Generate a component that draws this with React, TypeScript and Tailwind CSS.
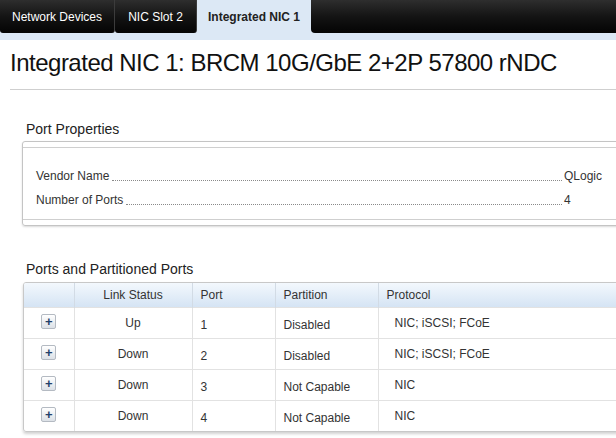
import React from "react";

const tabs = [
  { label: "Network Devices", width: "w-[115px]", active: false },
  { label: "NIC Slot 2", width: "w-[82px]", active: false },
  { label: "Integrated NIC 1", width: "w-[114px]", active: true },
];

const properties = [
  { name: "Vendor Name", value: "QLogic" },
  { name: "Number of Ports", value: "4" },
];

const ports = [
  { status: "Up", port: "1", partition: "Disabled", protocol: "NIC; iSCSI; FCoE" },
  { status: "Down", port: "2", partition: "Disabled", protocol: "NIC; iSCSI; FCoE" },
  { status: "Down", port: "3", partition: "Not Capable", protocol: "NIC" },
  { status: "Down", port: "4", partition: "Not Capable", protocol: "NIC" },
];

function TabBar() {
  return (
    <div className="flex h-[40px] bg-[#dce8f5]">
      {tabs.map((t) =>
        t.active ? (
          <div
            key={t.label}
            className={`${t.width} h-[33px] flex items-center justify-center text-[12px] font-bold text-[#222] bg-[#dce8f5]`}
          >
            {t.label}
          </div>
        ) : (
          <div
            key={t.label}
            className={`${t.width} h-[33px] flex items-center justify-center text-[12px] text-white bg-gradient-to-b from-[#2e2e2e] via-[#141414] to-[#050505] border-r border-[#3c3c3c] rounded-b-[3px]`}
          >
            {t.label}
          </div>
        )
      )}
      <div className="flex-1 h-[33px] bg-gradient-to-b from-[#2e2e2e] via-[#141414] to-[#050505] rounded-bl-[4px]" />
    </div>
  );
}

function PlusButton() {
  return (
    <span className="inline-flex items-center justify-center w-[15px] h-[15px] border border-[#b4bac2] rounded-[2px] bg-gradient-to-b from-white to-[#dce1e7] text-[#22406a] text-[13px] font-bold leading-none">
      +
    </span>
  );
}

export default function App() {
  return (
    <div
      className="w-[616px] h-[438px] overflow-hidden bg-white text-[#333]"
      style={{ fontFamily: '"Liberation Sans", Arial, sans-serif' }}
    >
      <TabBar />

      <h1 className="mt-[9px] ml-[10px] text-[24px] leading-[28px] tracking-[-0.5px] text-[#111] font-normal whitespace-nowrap">
        Integrated NIC 1: BRCM 10G/GbE 2+2P 57800 rNDC
      </h1>
      <div className="ml-[10px] mt-[12px] border-t border-[#cfcfcf]" />

      {/* Port Properties */}
      <h2 className="mt-[31px] ml-[26px] text-[14px] leading-[16px] text-[#222]">Port Properties</h2>
      <div className="ml-[22px] w-[610px] mt-[4px] border border-[#c4c4c4] rounded-[3px] shadow-[0_1px_2px_rgba(0,0,0,0.15)] py-[5px]">
        <div className="border-t border-b border-[#cfcfcf] pt-[13px] pb-[10px]">
          {properties.map((p) => (
            <div key={p.name} className="flex items-end h-[24px] pl-[13px] text-[12px] text-[#333]">
              <span className="shrink-0">{p.name}</span>
              <span className="w-[0px] flex-1 border-b border-dotted border-[#8a8a8a] mb-[4px] ml-[3px] mr-[1px]" />
              <span className="w-[68px] shrink-0 pl-[1px]">{p.value}</span>
            </div>
          ))}
        </div>
      </div>

      {/* Ports and Partitioned Ports */}
      <h2 className="mt-[35px] ml-[26px] text-[14px] leading-[16px] text-[#222]">Ports and Partitioned Ports</h2>
      <div className="ml-[23px] w-[610px] mt-[5px] border border-[#c8c8c8] rounded-[3px] shadow-[0_2px_3px_rgba(0,0,0,0.18)] overflow-hidden">
        <table className="w-full border-collapse text-[12px] text-[#333]">
          <thead>
            <tr className="h-[24px] bg-gradient-to-b from-[#f3f8fd] to-[#d5e4f4]">
              <th className="w-[50px] border-r border-[#d2dbe5] font-normal" />
              <th className="w-[118px] border-r border-[#d2dbe5] font-normal text-center">Link Status</th>
              <th className="w-[83px] border-r border-[#d2dbe5] font-normal text-left pl-[8px]">Port</th>
              <th className="w-[103px] border-r border-[#d2dbe5] font-normal text-left pl-[8px]">Partition</th>
              <th className="font-normal text-left pl-[8px]">Protocol</th>
            </tr>
          </thead>
          <tbody>
            {ports.map((r) => (
              <tr key={r.port} className="h-[31px] border-t border-[#e2e2e2]">
                <td className="border-r border-[#e2e2e2] text-center align-top pt-[5px]">
                  <PlusButton />
                </td>
                <td className="border-r border-[#e2e2e2] text-center align-top pt-[6px]">{r.status}</td>
                <td className="border-r border-[#e2e2e2] pl-[8px] align-top pt-[8px]">{r.port}</td>
                <td className="border-r border-[#e2e2e2] pl-[8px] align-top pt-[8px]">{r.partition}</td>
                <td className="pl-[16px] align-top pt-[6px]">{r.protocol}</td>
              </tr>
            ))}
          </tbody>
        </table>
      </div>
    </div>
  );
}
